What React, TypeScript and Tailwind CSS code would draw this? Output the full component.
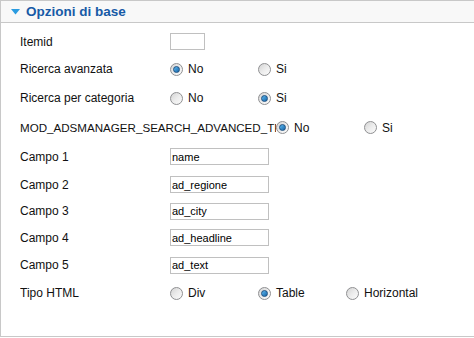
import React from 'react';

type Option = { label: string; checked?: boolean };

function Radio({ checked }: { checked?: boolean }) {
  return (
    <span className="relative flex h-[13px] w-[13px] shrink-0 items-center justify-center rounded-full border border-[#8f9092] bg-linear-to-br from-[#d4d4d4] via-[#ececec] to-[#fbfbfb]">
      {checked && (
        <span className="h-[7px] w-[7px] rounded-full border border-[#1d4f80] bg-linear-to-br from-[#5cb8f0] to-[#1566a8]" />
      )}
    </span>
  );
}

function RadioGroup({ options }: { options: Option[] }) {
  return (
    <div className="flex items-center">
      {options.map((o) => (
        <label key={o.label} className="flex w-[88px] items-center gap-[5px]">
          <Radio checked={o.checked} />
          <span>{o.label}</span>
        </label>
      ))}
    </div>
  );
}

function TextBox({ value, width }: { value: string; width: string }) {
  return (
    <input
      readOnly
      value={value}
      className={`h-[17px] ${width} border border-[#c0c0c0] bg-white px-px text-[11px] leading-[15px] text-black outline-none`}
    />
  );
}

interface RowProps {
  label: string;
  height: string;
  labelClass?: string;
  children: React.ReactNode;
}

function Row({ label, height, labelClass = 'w-[150px]', children }: RowProps) {
  return (
    <div className={`flex items-center ${height}`}>
      <span className={`shrink-0 overflow-hidden whitespace-nowrap ${labelClass}`}>{label}</span>
      {children}
    </div>
  );
}

const campi = [
  { label: 'Campo 1', value: 'name', height: 'h-[29px]' },
  { label: 'Campo 2', value: 'ad_regione', height: 'h-[27px]' },
  { label: 'Campo 3', value: 'ad_city', height: 'h-[26px]' },
  { label: 'Campo 4', value: 'ad_headline', height: 'h-[27px]' },
  { label: 'Campo 5', value: 'ad_text', height: 'h-[28px]' },
];

export default function App() {
  return (
    <div className="h-[338px] w-[474px] bg-white font-['Liberation_Sans',Arial,sans-serif] text-[12px] leading-[14px] text-[#111]">
      <div className="h-[337px] border-y border-l border-[#c8c8c8]">
        {/* Panel header */}
        <div className="flex h-[22px] items-center border-b border-[#c8c8c8] bg-[#f8f8f8] pl-[10px]">
          <svg width="9" height="6" viewBox="0 0 9 6" className="mr-[6px] mt-px">
            <path d="M0 0h9L4.5 5.5z" fill="#2a9be0" />
          </svg>
          <h3 className="text-[13.5px] font-bold leading-[16px] text-[#175aa6]">Opzioni di base</h3>
        </div>

        {/* Parameters */}
        <div className="pl-[19px] pt-[5px]">
          <Row label="Itemid" height="h-[27px]">
            <TextBox value="" width="w-[35px]" />
          </Row>
          <Row label="Ricerca avanzata" height="h-[28px]">
            <RadioGroup options={[{ label: 'No', checked: true }, { label: 'Si' }]} />
          </Row>
          <Row label="Ricerca per categoria" height="h-[30px]">
            <RadioGroup options={[{ label: 'No' }, { label: 'Si', checked: true }]} />
          </Row>
          <Row
            label="MOD_ADSMANAGER_SEARCH_ADVANCED_TEXT"
            height="h-[29px]"
            labelClass="w-[256px] text-[11.6px]"
          >
            <RadioGroup options={[{ label: 'No', checked: true }, { label: 'Si' }]} />
          </Row>
          {campi.map((c) => (
            <Row key={c.label} label={c.label} height={c.height}>
              <TextBox value={c.value} width="w-[99px]" />
            </Row>
          ))}
          <Row label="Tipo HTML" height="h-[28px]">
            <RadioGroup
              options={[{ label: 'Div' }, { label: 'Table', checked: true }, { label: 'Horizontal' }]}
            />
          </Row>
        </div>
      </div>
    </div>
  );
}
